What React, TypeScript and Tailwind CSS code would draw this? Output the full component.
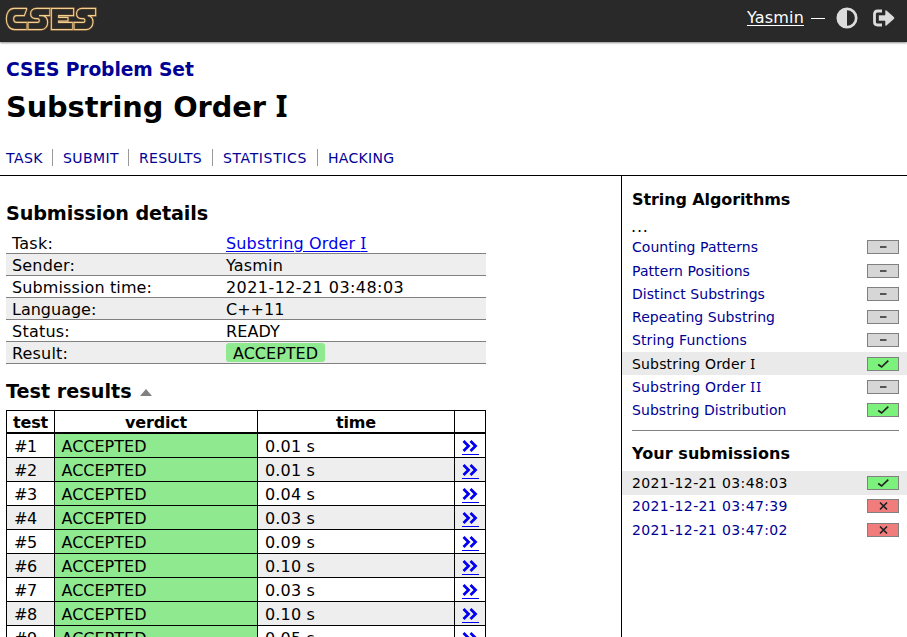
import type { ReactNode } from "react";

const submissionTime = "2021-12-21 03:48:03";

const nav = [
  { label: "TASK", cls: "pr-[9px] tracking-[0.47px]" },
  { label: "SUBMIT", cls: "border-l pl-[10px] w-[76px] tracking-[0.42px]" },
  { label: "RESULTS", cls: "border-l pl-[10px] w-[84px] tracking-[0.28px]" },
  { label: "STATISTICS", cls: "border-l pl-[10px] w-[105px] tracking-[0.62px]" },
  { label: "HACKING", cls: "border-l pl-[10px] tracking-[0.31px]" },
];

const tests = ["0.01", "0.01", "0.04", "0.03", "0.09", "0.10", "0.03", "0.10", "0.05"];

type State = "none" | "ok" | "bad";

const tasks: { name: string; state: State; numeral?: string; cls: string; current?: boolean }[] = [
  { name: "Counting Patterns", state: "none", cls: "tracking-[0.04px]" },
  { name: "Pattern Positions", state: "none", cls: "tracking-[0.08px]" },
  { name: "Distinct Substrings", state: "none", cls: "tracking-[0.05px]" },
  { name: "Repeating Substring", state: "none", cls: "tracking-[0.04px]" },
  { name: "String Functions", state: "none", cls: "tracking-[0.12px]" },
  { name: "Substring Order ", numeral: "I", state: "ok", cls: "tracking-[0.17px]", current: true },
  { name: "Substring Order ", numeral: "II", state: "none", cls: "tracking-[0.17px]" },
  { name: "Substring Distribution", state: "ok", cls: "tracking-[0.07px]" },
];

const submissions: { time: string; state: State; current?: boolean }[] = [
  { time: "2021-12-21 03:48:03", state: "ok", current: true },
  { time: "2021-12-21 03:47:39", state: "bad" },
  { time: "2021-12-21 03:47:02", state: "bad" },
];

function Numeral({ children }: { children: ReactNode }) {
  return <span className="font-['Noto_Sans'] text-[1.04em] leading-none tracking-[0.08em]">{children}</span>;
}

function Logo() {
  const shapes = [
    "M81 25H42C27 25 19 40 19 57C19 76 29 89 44 89H81V67H50C38 67 38 47 50 47H73L81 25",
    "M150 25H109C87 25 86 56 107 56H113C120 57 119 67 113 67H84V89H124C148 89 150 47 126 47H117L150 47Z",
    "M154 25H221V47H176V52H204V63H176V67H218V89H154Z",
    "M287 25H246C225 25 224 56 244 56H250C257 57 256 67 250 67H222V89H259C283 89 287 47 263 47H287Z",
  ];
  return (
    <svg className="mt-[7px] h-[24px] w-[92px]" viewBox="15 21 276 72" fill="none">
      {shapes.map((d) => (
        <g key={d}>
          <path d={d} stroke="#6b4a28" strokeWidth="8" strokeOpacity="0.65" />
          <path d={d} stroke="#f2d090" strokeWidth="3.3" />
        </g>
      ))}
    </svg>
  );
}

function Badge({ state }: { state: State }) {
  const fill = state === "ok" ? "bg-[#7cf17c]" : state === "bad" ? "bg-[#f17c7c]" : "bg-[#d6d6d6]";
  return (
    <span className={`flex h-[14px] w-[32px] shrink-0 items-center justify-center border border-[#808080] ${fill}`}>
      <svg width="14" height="12" viewBox="0 0 14 12" fill="none">
        {state === "none" && <path d="M4 6H10.5" stroke="#555" strokeWidth="2" />}
        {state === "ok" && <path d="M2.2 6.5L5.6 9L12.3 2.7" stroke="#222" strokeWidth="1.7" />}
        {state === "bad" && <path d="M4 2.5L11 9.5M11 2.5L4 9.5" stroke="#222" strokeWidth="1.7" />}
      </svg>
    </span>
  );
}

function SideRow({ current, state, children }: { current?: boolean; state: State; children: ReactNode }) {
  return (
    <li
      className={`flex h-[23.3px] items-center justify-between pr-[8px] pl-[10px] text-sm leading-[18px] ${
        current ? "bg-[#eaeaea] text-black" : "text-[#000095]"
      }`}
    >
      {children}
      <Badge state={state} />
    </li>
  );
}

function DetailRow({ label, shaded, children }: { label: ReactNode; shaded?: boolean; children: ReactNode }) {
  return (
    <div className={`flex h-[22px] items-start border-b border-[#808080] pl-[6px] leading-[23px] ${shaded ? "bg-[#eee]" : ""}`}>
      <div className="w-[214px]">{label}</div>
      <div className="whitespace-nowrap">{children}</div>
    </div>
  );
}

export default function App() {
  return (
    <div className="flex h-[637px] w-[907px] flex-col overflow-hidden bg-white font-['DejaVu_Sans',sans-serif] text-base text-black">
      <header className="z-10 flex h-[42px] shrink-0 items-start justify-between bg-[#292929] pl-[5px] shadow-[0_1px_2px_rgba(0,0,0,0.45)]">
        <Logo />
        <div className="flex items-center pt-[6px] pr-[12px] text-white">
          <a className="tracking-[0.19px] underline underline-offset-2">Yasmin</a>
          <span className="ml-[7px] w-[14px] border-t border-white" />
          <svg className="ml-[11px]" width="22" height="22" viewBox="0 0 22 22">
            <circle cx="11" cy="11" r="9.2" fill="none" stroke="#dcdcdc" strokeWidth="2.7" />
            <path d="M11 2A9 9 0 0 0 11 20Z" fill="#dcdcdc" />
          </svg>
          <svg className="ml-[15px]" width="22" height="18" viewBox="0 0 22 18">
            <path d="M9 2H4.5Q1.5 2 1.5 5V13Q1.5 16 4.5 16H9" fill="none" stroke="#dcdcdc" strokeWidth="2.8" />
            <path d="M5.5 6H12V1.8Q12.2 .4 13.5 1.2L21.2 8Q22 9 21.2 10L13.5 16.8Q12.2 17.6 12 16.2V12H5.5Z" fill="#dcdcdc" stroke="#292929" strokeWidth="0.6" />
          </svg>
        </div>
      </header>

      <div className="h-[133px] shrink-0 pt-[16px] pl-[6px]">
        <h4 className="text-[18.7px] leading-[24px] font-bold tracking-[-0.11px] text-[#000095]">CSES Problem Set</h4>
        <h1 className="mt-[7px] text-[28.8px] leading-[36px] font-bold tracking-[-0.08px]">
          Substring Order <Numeral>I</Numeral>
        </h1>
        <nav className="mt-[24px] flex text-sm leading-[17px] text-[#000095]">
          {nav.map((n) => (
            <a key={n.label} className={`h-[17px] border-[#999] leading-[19px] ${n.cls}`}>
              {n.label}
            </a>
          ))}
        </nav>
      </div>

      <div className="flex min-h-0 grow border-t border-black">
        <main className="w-[621px] shrink-0 overflow-hidden pl-[6px]">
          <h2 className="mt-[26px] text-[19.2px] leading-[24px] font-bold tracking-[-0.12px]">Submission details</h2>
          <section className="mt-[6px] w-[480px]">
            <DetailRow label={<span className="tracking-[0.22px]">Task:</span>}>
              <a className="tracking-[0.16px] text-[#0000ee] underline underline-offset-2">
                Substring Order <Numeral>I</Numeral>
              </a>
            </DetailRow>
            <DetailRow shaded label={<span className="tracking-[0.17px]">Sender:</span>}>
              <span className="tracking-[0.19px]">Yasmin</span>
            </DetailRow>
            <DetailRow label={<span className="tracking-[0.12px]">Submission time:</span>}>
              <span className="tracking-[0.43px]">{submissionTime}</span>
            </DetailRow>
            <DetailRow shaded label="Language:">
              C++11
            </DetailRow>
            <DetailRow label={<span className="tracking-[0.23px]">Status:</span>}>
              <span className="tracking-[0.12px]">READY</span>
            </DetailRow>
            <DetailRow shaded label={<span className="tracking-[0.17px]">Result:</span>}>
              <span className="mt-px flex h-[19px] w-[99px] justify-center rounded-[3px] bg-[#8fe98f] leading-[21px]">ACCEPTED</span>
            </DetailRow>
          </section>

          <h2 className="mt-[16px] flex items-center text-[19.2px] leading-[24px] font-bold">
            Test results
            <svg className="ml-[8px]" width="12" height="7" viewBox="0 0 12 7">
              <path d="M0 7L6 0L12 7Z" fill="#808080" />
            </svg>
          </h2>

          <section className="mt-[6px] w-[480px] border-t border-black">
            <div className="grid h-[23px] grid-cols-[48px_203px_197px_32px] grid-rows-[21px] border-b-2 border-black text-center leading-[23px] font-bold tracking-[-0.17px]">
              <div className="border-l border-black">test</div>
              <div className="border-l border-black">verdict</div>
              <div className="border-l border-black">time</div>
              <div className="border-x border-black" />
            </div>
            {tests.map((time, i) => (
              <div
                key={i}
                className={`grid h-[24px] grid-cols-[48px_203px_197px_32px] grid-rows-[23px] border-b border-black leading-[25px] ${i % 2 ? "bg-[#eee]" : ""}`}
              >
                <div className="border-l border-black pl-[7px] tracking-[-0.4px]">#{i + 1}</div>
                <div className="border-l border-black bg-[#8fe98f] pl-[6.5px]">ACCEPTED</div>
                <div className="border-l border-black pl-[7px] tracking-[0.16px]">{time} s</div>
                <a className="flex justify-center border-x border-black pt-[5px]">
                  <svg width="17" height="16" viewBox="0 0 17 16" fill="none" stroke="#0000ee">
                    <path d="M1.5 2L6.5 7L1.5 12M8.5 2L13.5 7L8.5 12" strokeWidth="2.8" />
                    <path d="M0 15.5H17" />
                  </svg>
                </a>
              </div>
            ))}
          </section>
        </main>

        <aside className="grow border-l border-black pt-[14px]">
          <h4 className="pl-[10px] text-base leading-[20px] font-bold tracking-[-0.1px]">String Algorithms</h4>
          <div className="mt-[9px] pl-[9px] leading-[16px] tracking-[0.8px]">...</div>
          <ul className="pt-[0.6px]">
            {tasks.map((t) => (
              <SideRow key={t.name + (t.numeral ?? "")} current={t.current} state={t.state}>
                <a className={`whitespace-pre ${t.cls}`}>
                  {t.name}
                  {t.numeral && <Numeral>{t.numeral}</Numeral>}
                </a>
              </SideRow>
            ))}
          </ul>
          <hr className="mt-[8px] mr-[8px] ml-[10px] border-[#808080]" />
          <h4 className="mt-[13.5px] mb-[7px] pl-[10px] text-base leading-[20px] font-bold tracking-[0.07px]">Your submissions</h4>
          <ul>
            {submissions.map((s) => (
              <SideRow key={s.time} current={s.current} state={s.state}>
                <a className="tracking-[0.38px]">{s.time}</a>
              </SideRow>
            ))}
          </ul>
        </aside>
      </div>
    </div>
  );
}
